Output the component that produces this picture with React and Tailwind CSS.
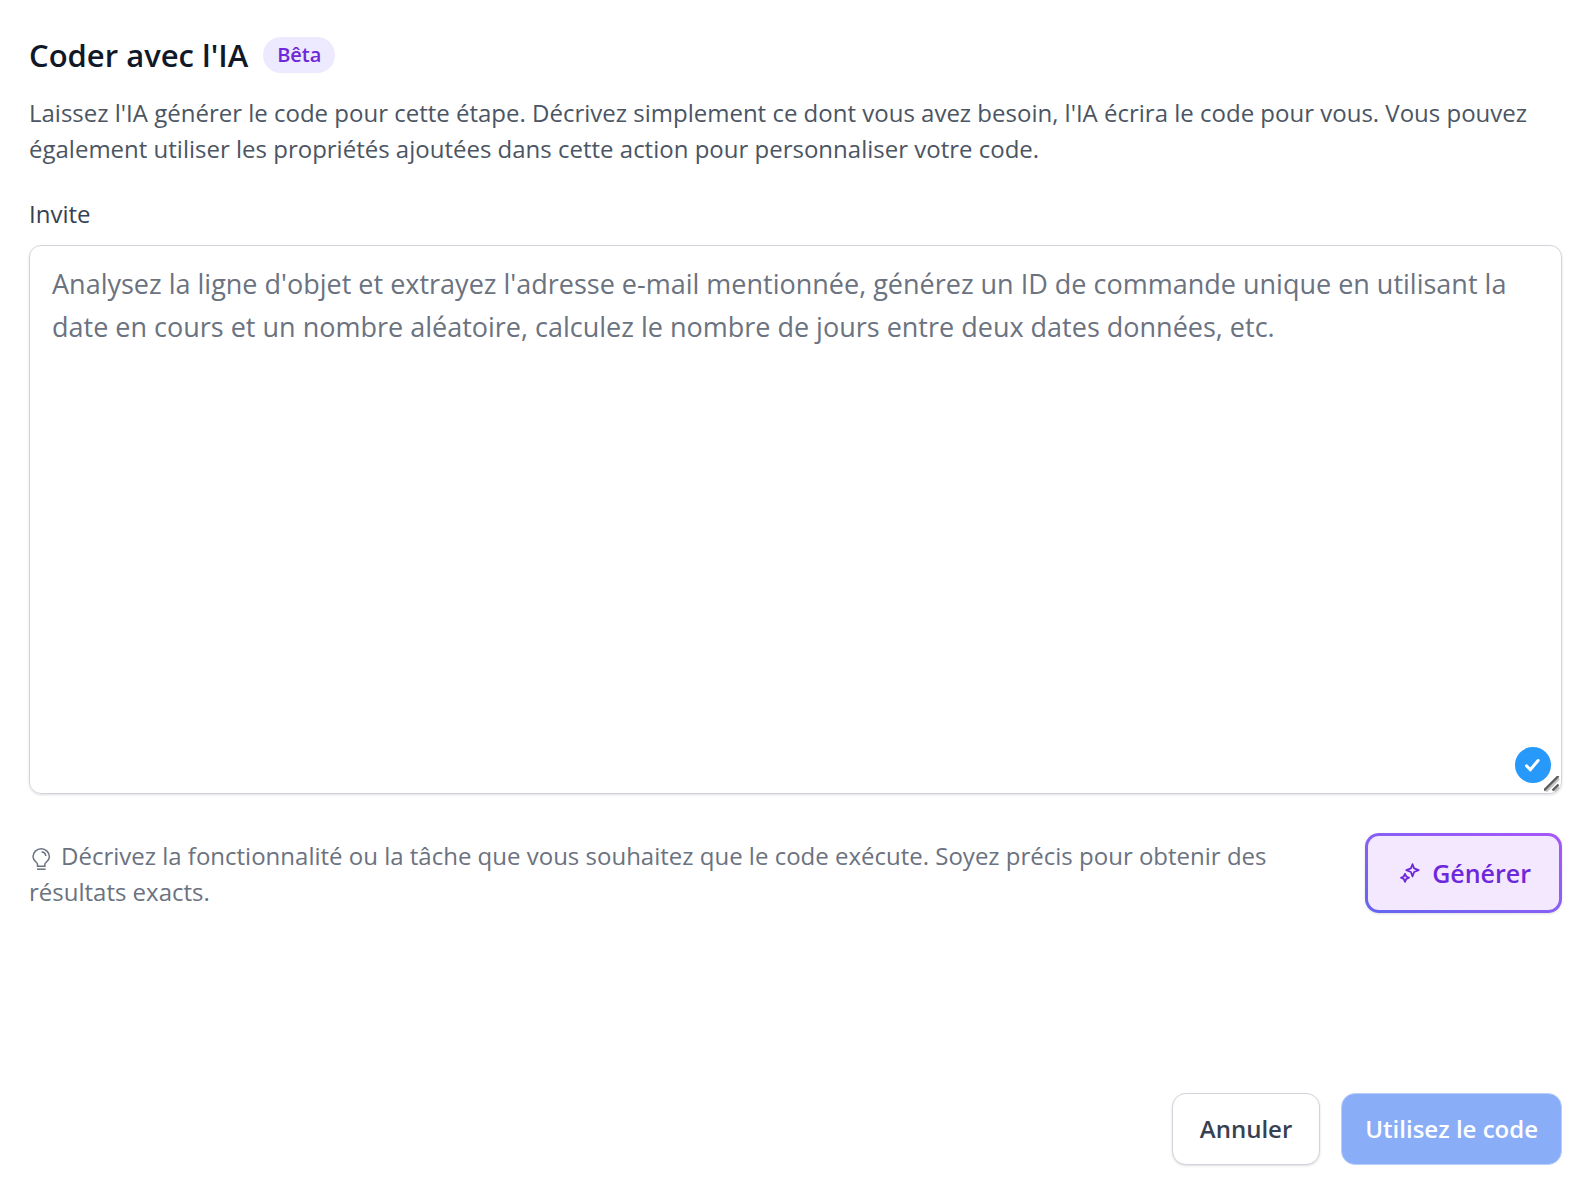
import React, { useState } from 'react';

const BulbIcon = () => (
  <svg
    aria-hidden="true"
    viewBox="0 0 24 25"
    fill="none"
    stroke="currentColor"
    strokeWidth="1.5"
    className="mr-2 inline-block h-[25px] w-6"
  >
    <path d="M8.5 20.200v-2.200c0-1.400-4.500-3-4.500-7.200a8.200 8 0 0 1 16.400 0c0 4.200-4.500 5.800-4.500 7.200v2.200z" />
    <path d="M12.600 6c2.300.1 4 1.700 4.200 4" />
    <path d="M8 23.200h8.600" />
  </svg>
);

const SparklesIcon = () => (
  <svg
    aria-hidden="true"
    viewBox="0 0 20 20"
    fill="none"
    stroke="currentColor"
    strokeWidth="1.8"
    strokeLinejoin="round"
    className="h-5 w-5"
  >
    <path d="M12.500 1.200l1.600 4.200 4.600 1.800-4.600 1.800-1.600 4.400-1.600-4.400-4.600-1.800 4.600-1.800z" />
    <path d="M5 10.800l1.300 2.700 2.700 1.200-2.700 1.200-1.300 2.900-1.300-2.900L1 14.700l2.700-1.200z" />
  </svg>
);

const App = () => {
  const [prompt, setPrompt] = useState('');

  return (
    <main className="flex min-h-screen flex-col bg-white pt-[31px] pr-[31px] pb-[27px] pl-[29px] font-['Open_Sans',sans-serif]">
      {/* Header */}
      <div className="flex items-center gap-[15px]">
        <h1 className="text-[31px] leading-[48px] font-semibold text-[#111827]">Coder avec l'IA</h1>
        <span className="rounded-full bg-[#ede9fe] px-[14px] text-[20px] leading-9 font-semibold text-[#6d28d9]">
          Bêta
        </span>
      </div>
      <p className="mt-4 text-[24px] leading-9 text-[#4b5563]">
        Laissez l'IA générer le code pour cette étape. Décrivez simplement ce dont vous avez besoin,
        l'IA écrira le code pour vous. Vous pouvez également utiliser les propriétés ajoutées dans
        cette action pour personnaliser votre code.
      </p>

      {/* Prompt */}
      <label htmlFor="prompt" className="mt-[29px] text-[24px] leading-9 text-[#374151]">
        Invite
      </label>
      <div className="relative mt-[13px] flex">
        <textarea
          id="prompt"
          rows={12}
          value={prompt}
          onChange={(e) => setPrompt(e.target.value)}
          placeholder="Analysez la ligne d'objet et extrayez l'adresse e-mail mentionnée, générez un ID de commande unique en utilisant la date en cours et un nombre aléatoire, calculez le nombre de jours entre deux dates données, etc."
          className="w-full resize-none rounded-xl border border-[#d1d5db] px-[22px] pt-4 pb-[15px] text-[27px] leading-[43px] text-[#111827] shadow-sm placeholder:text-[#6b7280] focus:outline-none"
        />
        <span className="absolute right-[11px] bottom-[11px] flex h-9 w-9 items-center justify-center rounded-full bg-[#2699fb]">
          <svg
            aria-hidden="true"
            viewBox="0 0 16 14"
            fill="none"
            stroke="white"
            strokeWidth="3"
            strokeLinecap="round"
            strokeLinejoin="round"
            className="h-[14px] w-4"
          >
            <path d="M1.500 7.800l3.800 4L13.100 2.500" />
          </svg>
        </span>
        <svg
          aria-hidden="true"
          viewBox="0 0 16 16"
          fill="none"
          strokeWidth="2.400"
          className="absolute right-0.5 bottom-0.5 h-4 w-4"
        >
          <path stroke="#c4c4c4" d="M2 15.500L15 2.500M10.500 15.500l4.500-4.500" />
          <path stroke="#5c5c5c" d="M0 14.500L14.500 0M8.500 14.500l6-6" />
        </svg>
      </div>

      <div className="mt-[39px] flex items-start justify-between">
        <p className="mt-[5px] max-w-[1260px] text-[24px] leading-9 text-[#6b7280]">
          <BulbIcon />
          Décrivez la fonctionnalité ou la tâche que vous souhaitez que le code exécute. Soyez
          précis pour obtenir des résultats exacts.
        </p>
        <button
          type="button"
          className="shrink-0 rounded-[14px] bg-linear-to-tr from-[#6366f1] to-[#a855f7] p-[3px] text-[#6d28d9] shadow-sm"
        >
          <span className="flex items-center gap-3 rounded-[11px] bg-[#f3e8fd] py-[19px] pr-7 pl-8 text-[25px] leading-9 font-semibold">
            <SparklesIcon />
            Générer
          </span>
        </button>
      </div>

      {/* Footer */}
      <div className="mt-auto flex justify-end gap-[21px]">
        <button
          type="button"
          className="rounded-[14px] border border-[#d1d5db] bg-white px-[27px] py-[17px] text-[24px] leading-9 font-semibold text-[#374151] shadow-sm"
        >
          Annuler
        </button>
        <button
          type="button"
          disabled
          className="rounded-[14px] border border-[#b9cffb] bg-[#8aadf8] px-[23px] py-[17px] text-[24px] leading-9 font-semibold text-white"
        >
          Utilisez le code
        </button>
      </div>
    </main>
  );
};

export default App;
